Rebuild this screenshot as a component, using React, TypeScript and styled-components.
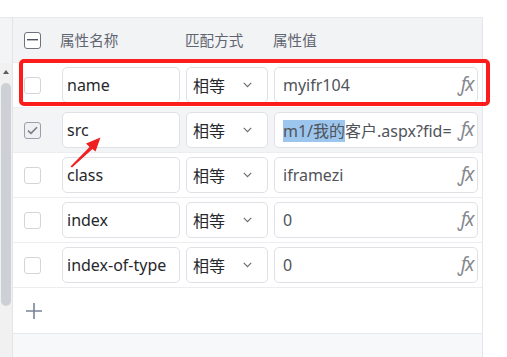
import React from "react";
import styled, { createGlobalStyle } from "styled-components";

const GlobalStyle = createGlobalStyle`
  html, body { margin: 0; padding: 0; background: #ffffff; }
  body { font-family: "Noto Sans", "Noto Sans CJK SC", sans-serif; }
  * { box-sizing: border-box; }
`;

const Page = styled.div`
  position: relative;
  width: 507px;
  height: 357px;
  padding-top: 17px;
  display: flex;
  overflow: hidden;
`;

const ScrollStrip = styled.div`
  width: 13px;
  display: flex;
  flex-direction: column;
  background: #f1f1f1;
  border-right: 1px solid #e3e4e8;
  border-top: 1px solid #e8e9ed;
`;

const StripHead = styled.div`
  height: 45px;
  background: #f3f4f6;
`;

const ArrowBtn = styled.div`
  height: 20px;
  display: flex;
  justify-content: center;
  align-items: center;
  &::before {
    content: "";
    border-left: 3.5px solid transparent;
    border-right: 3.5px solid transparent;
    border-bottom: 4px solid #5c5c5c;
    margin-top: -2px;
  }
`;

const Thumb = styled.div`
  height: 223px;
  margin: 0 1px 0 1px;
  border-radius: 5px;
  background: #cdd0d4;
`;

const Panel = styled.div`
  width: 470px;
  display: flex;
  flex-direction: column;
  background: #f7f8fa;
  border-right: 1px solid #e5e6eb;
  border-top: 1px solid #e8e9ed;
`;

const Grid = styled.div<{ $bg?: string }>`
  position: relative;
  display: grid;
  grid-template-columns: 43px 118px 82px 204px;
  column-gap: 6px;
  align-items: center;
  height: 45px;
  padding: 4px 0 4px 0;
  background: ${(p) => p.$bg || "#ffffff"};
  border-bottom: 1px solid #ebedf0;
`;

const HeaderRow = styled(Grid)`
  background: #f2f3f5;
`;

const HeadLabel = styled.div<{ $shift?: number }>`
  font-size: 14.6px;
  color: #5f6470;
  margin-left: ${(p) => p.$shift ?? -1}px;
  margin-top: -1px;
`;

const CheckCell = styled.div`
  padding-left: 11px;
  display: flex;
  align-items: center;
`;

const Box = styled.div<{ $variant: "empty" | "checked" | "partial" }>`
  width: 17px;
  height: 17px;
  border-radius: 3px;
  border: 1px solid
    ${(p) =>
      p.$variant === "partial" ? "#6d737d" : p.$variant === "checked" ? "#9aa0a9" : "#d3d5da"};
  background: ${(p) => (p.$variant === "checked" ? "#eef0f3" : "#ffffff")};
  display: flex;
  align-items: center;
  justify-content: center;
`;

const Field = styled.div<{ $pad?: number }>`
  height: 36px;
  border: 1px solid #dfe1e6;
  border-radius: 5px;
  background: #ffffff;
  display: flex;
  align-items: center;
  padding-left: ${(p) => p.$pad ?? 4}px;
  font-size: 16px;
  color: #26282c;
  white-space: nowrap;
  overflow: hidden;
`;

const SelectField = styled(Field)`
  justify-content: space-between;
  padding-right: 15px;
`;

const ValueField = styled(Field)`
  color: #505359;
  padding-right: 4px;
  justify-content: space-between;
`;

const ValueText = styled.span`
  flex: none;
`;

const Selected = styled.span`
  background: #9dc6ee;
`;

const Fx = styled.span`
  font-family: "Noto Sans", "DejaVu Sans", sans-serif;
  font-style: italic;
  font-size: 19px;
  color: #85888e;
  margin-left: 4px;
  letter-spacing: -1.5px;
  flex: none;
  margin-top: -2px;
`;

const AddRow = styled.div`
  height: 46px;
  display: flex;
  align-items: center;
  padding-left: 12px;
  background: #ffffff;
  border-bottom: 1px solid #e6e8ec;
`;

const Highlight = styled.div`
  position: absolute;
  left: 6px;
  right: -8px;
  top: -4px;
  bottom: 1px;
  border: 4px solid #fd1c1c;
  border-radius: 5px;
  pointer-events: none;
`;

const Pointer = styled.svg`
  position: absolute;
  left: 66px;
  top: 132px;
`;

const Chevron = () => (
  <svg width="9" height="6" viewBox="0 0 9 6">
    <polyline points="0.8,0.8 4.5,4.6 8.2,0.8" fill="none" stroke="#6a6d73" strokeWidth="1.2" />
  </svg>
);

type Row = { name: string; value: React.ReactNode; checked?: boolean; bg?: string; boxed?: boolean };

const rows: Row[] = [
  { name: "name", value: "myifr104", boxed: true },
  {
    name: "src",
    checked: true,
    bg: "#f3f4f6",
    value: (
      <>
        <Selected>m1/我的</Selected>客户.aspx?fid=
      </>
    ),
  },
  { name: "class", value: "iframezi" },
  { name: "index", value: "0" },
  { name: "index-of-type", value: "0" },
];

export default function App() {
  return (
    <>
      <GlobalStyle />
      <Page>
        <ScrollStrip>
          <StripHead />
          <ArrowBtn />
          <Thumb />
        </ScrollStrip>
        <Panel>
          <HeaderRow>
            <CheckCell>
              <Box $variant="partial">
                <svg width="11" height="2" viewBox="0 0 11 2">
                  <rect x="0" y="0" width="11" height="1.4" fill="#4f545c" />
                </svg>
              </Box>
            </CheckCell>
            <HeadLabel $shift={-2}>属性名称</HeadLabel>
            <HeadLabel>匹配方式</HeadLabel>
            <HeadLabel>属性值</HeadLabel>
          </HeaderRow>
          {rows.map((r) => (
            <Grid key={r.name} $bg={r.bg}>
              <CheckCell>
                <Box $variant={r.checked ? "checked" : "empty"}>
                  {r.checked && (
                    <svg width="11" height="9" viewBox="0 0 11 9">
                      <polyline points="1,4.6 4,7.4 10,1.2" fill="none" stroke="#787e89" strokeWidth="1.6" />
                    </svg>
                  )}
                </Box>
              </CheckCell>
              <Field $pad={4}>{r.name}</Field>
              <SelectField $pad={6}>
                相等
                <Chevron />
              </SelectField>
              <ValueField $pad={8}>
                <ValueText>{r.value}</ValueText>
                <Fx>ƒx</Fx>
              </ValueField>
              {r.boxed && <Highlight />}
            </Grid>
          ))}
          <AddRow>
            <svg width="18" height="18" viewBox="0 0 18 18">
              <path d="M9 1 V17 M1 9 H17" stroke="#7a8396" strokeWidth="1.6" fill="none" />
            </svg>
          </AddRow>
        </Panel>
        <Pointer width="40" height="40" viewBox="66 132 40 40">
          <path d="M70.5 166.5 L89.5 147 L86 143.5 L100.5 137.5 L95.5 151.5 L92.5 149 L72 167.5 Z" fill="#ee2020" />
        </Pointer>
      </Page>
    </>
  );
}
